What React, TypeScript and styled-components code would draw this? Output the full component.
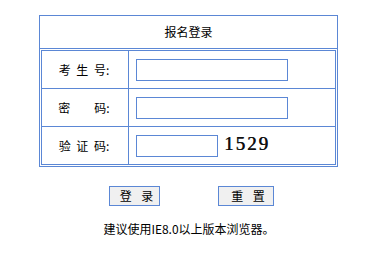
import styled, { createGlobalStyle } from 'styled-components'

const BLUE = '#5b87d5'

const GlobalStyle = createGlobalStyle`
  html, body {
    margin: 0;
    padding: 0;
    background: #ffffff;
  }
  body {
    font-family: "Noto Sans CJK SC", "Liberation Sans", sans-serif;
    font-size: 12px;
    color: #000000;
  }
`

const Page = styled.div`
  padding: 15px 0 0 39px;
  width: 299px;
`

const Panel = styled.div`
  width: 299px;
  box-sizing: border-box;
  border: 1px solid ${BLUE};
`

const Title = styled.div`
  height: 32px;
  line-height: 32px;
  text-align: center;
  border-bottom: 1px solid ${BLUE};
`

const PanelBody = styled.div`
  padding: 1px;
`

const FormTable = styled.div`
  border: 1px solid ${BLUE};
`

const Row = styled.div`
  display: grid;
  grid-template-columns: 87px 1fr;
  height: 37px;

  & + & {
    border-top: 1px solid ${BLUE};
  }
`

const Label = styled.div`
  display: flex;
  align-items: center;
  justify-content: center;
  border-right: 1px solid ${BLUE};
  word-spacing: 3px;
  white-space: pre;
  padding-right: 2px;
`

const Field = styled.div`
  display: flex;
  align-items: center;
  gap: 6px;
  padding-left: 7px;
`

const TextInput = styled.input<{ $width: number }>`
  width: ${p => p.$width}px;
  height: 22px;
  box-sizing: border-box;
  border: 1px solid ${BLUE};
  padding: 0 2px;
  margin: 0;
  outline: none;
  font: 12px "Noto Sans CJK SC", sans-serif;
`

const Captcha = styled.span`
  font-family: "Liberation Serif", "DejaVu Serif", serif;
  font-size: 19px;
  font-weight: normal;
  letter-spacing: 2px;
  color: #111111;
  text-shadow: 0.4px 0 0 #111111;
  margin-top: -3px;
`

const Actions = styled.div`
  display: flex;
  gap: 58px;
  padding-left: 70px;
  margin-top: 19px;
`

const Button = styled.button<{ $width: number }>`
  width: ${p => p.$width}px;
  height: 20px;
  box-sizing: border-box;
  border: 1px solid ${BLUE};
  background: #f0f0f0;
  padding: 0 0 0 4px;
  margin: 0;
  font: 12px "Noto Sans CJK SC", sans-serif;
  line-height: 18px;
  word-spacing: 7px;
  color: #000;
  cursor: pointer;
`

const Note = styled.div`
  margin-top: 17px;
  line-height: 12px;
  text-align: center;
  padding-left: 1px;
`

export default function App() {
  return (
    <>
      <GlobalStyle />
      <Page>
        <Panel>
          <Title>报名登录</Title>
          <PanelBody>
            <FormTable>
              <Row>
                <Label>考 生 号:</Label>
                <Field>
                  <TextInput $width={152} type="text" />
                </Field>
              </Row>
              <Row>
                <Label>密　　码:</Label>
                <Field>
                  <TextInput $width={152} type="password" />
                </Field>
              </Row>
              <Row>
                <Label>验 证 码:</Label>
                <Field>
                  <TextInput $width={82} type="text" />
                  <Captcha>1529</Captcha>
                </Field>
              </Row>
            </FormTable>
          </PanelBody>
        </Panel>
        <Actions>
          <Button $width={51}>登 录</Button>
          <Button $width={56}>重 置</Button>
        </Actions>
        <Note>建议使用IE8.0以上版本浏览器。</Note>
      </Page>
    </>
  )
}
